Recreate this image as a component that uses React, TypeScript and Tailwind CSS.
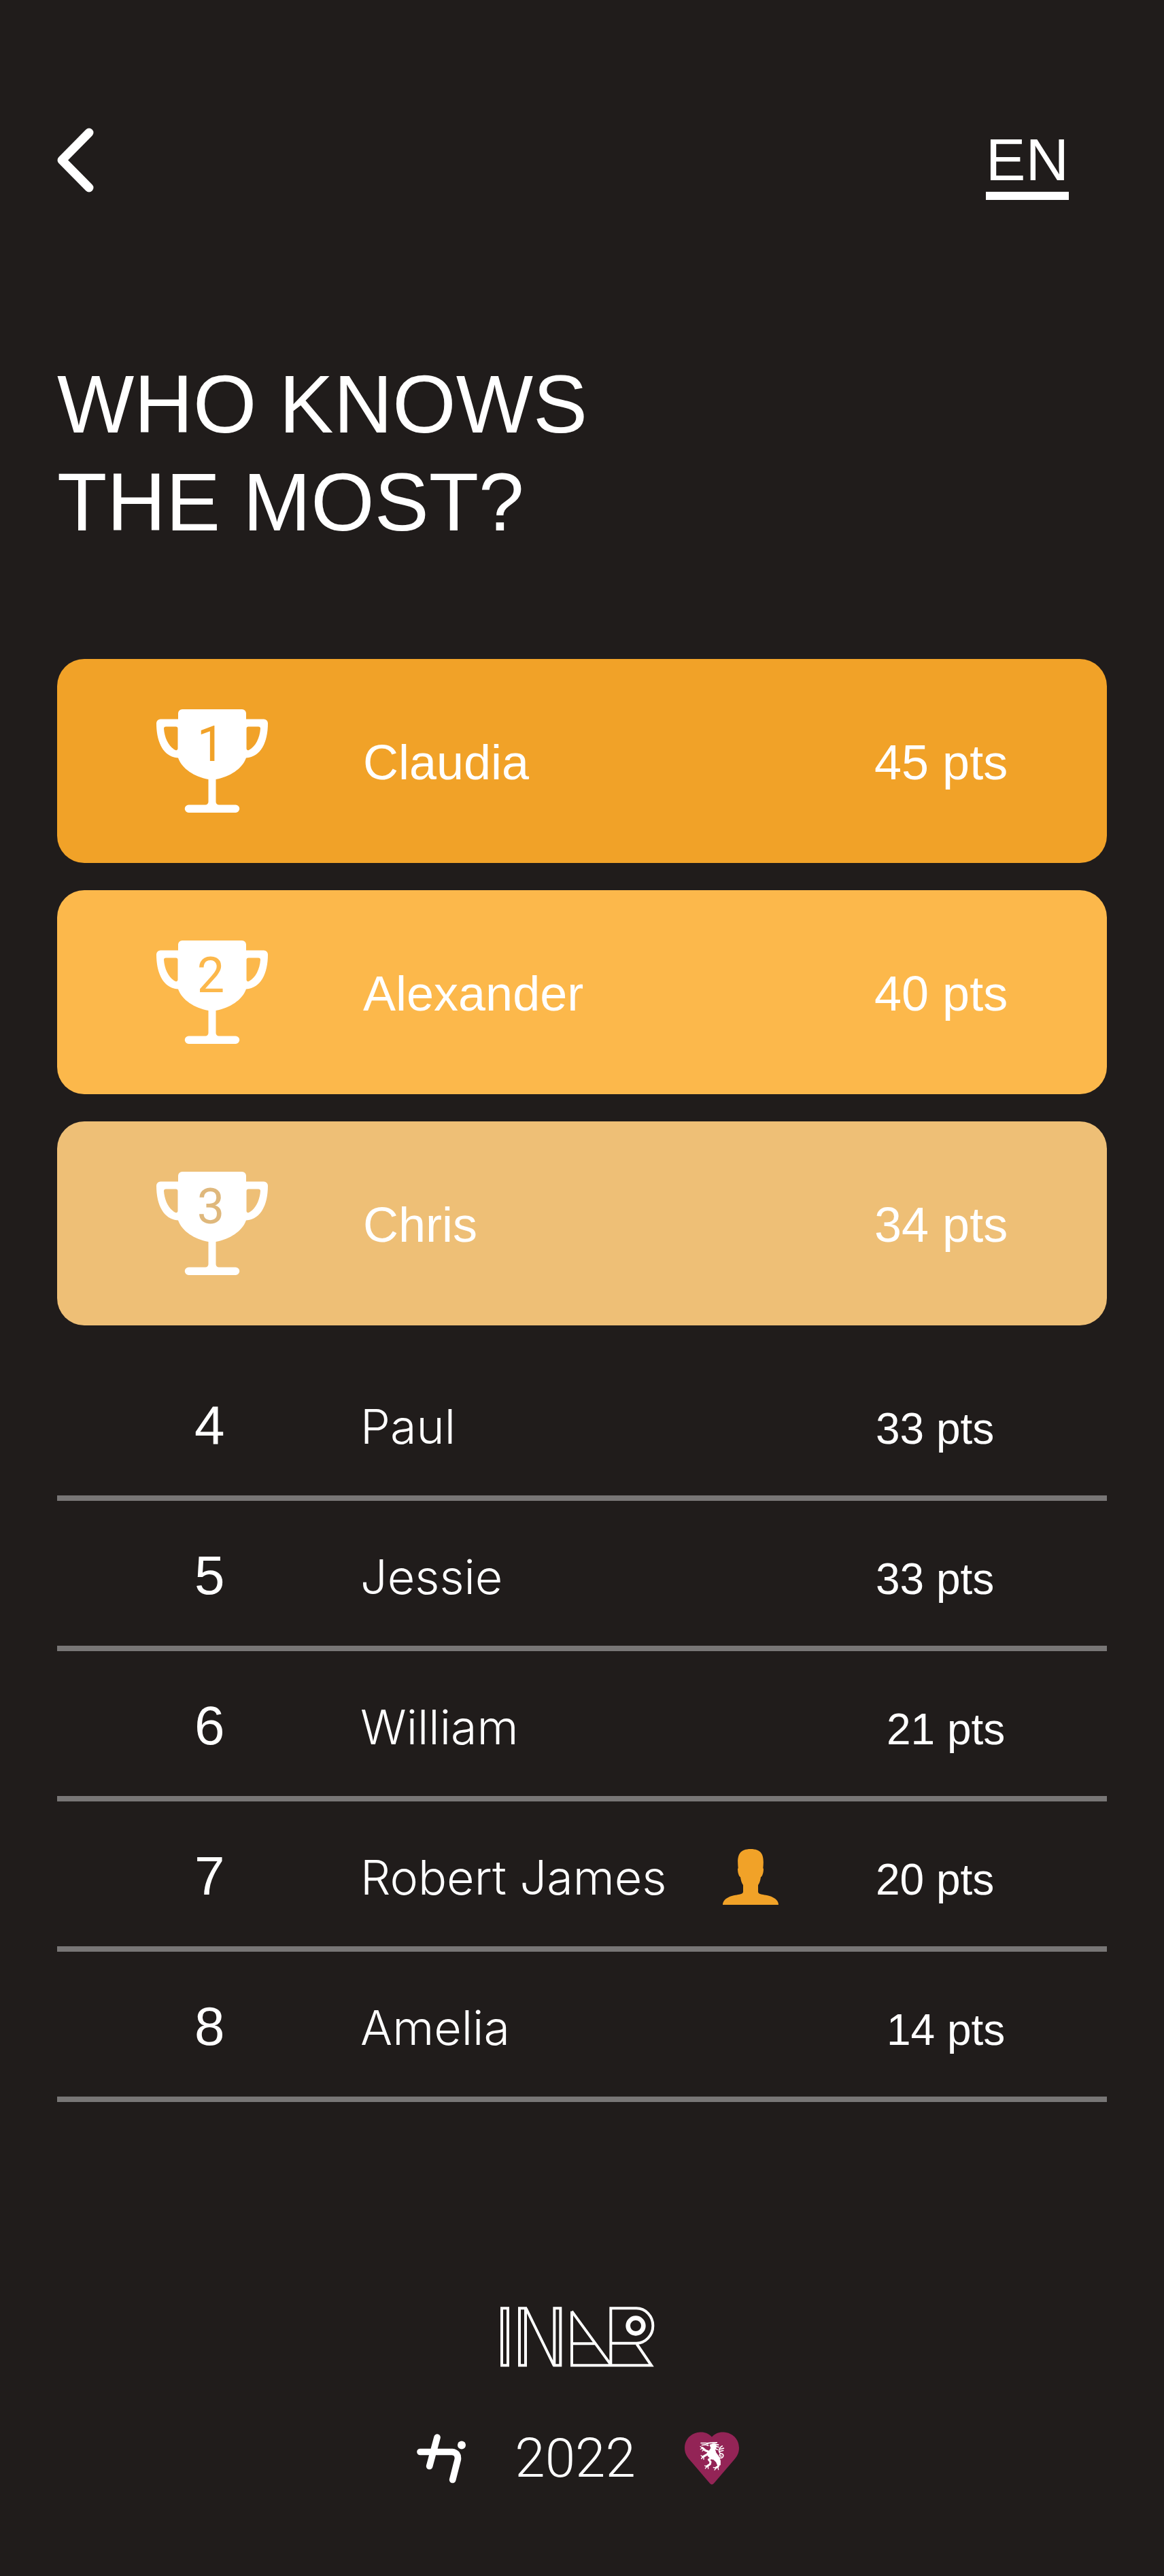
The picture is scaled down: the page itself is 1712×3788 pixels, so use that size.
import React from "react";

interface Player {
  rank: number;
  name: string;
  points: number;
  isMe?: boolean;
  indent?: boolean;
}

const podium = [
  { rank: 1, name: "Claudia", points: 45, card: "bg-[#f1a228]", digit: "text-[#f1a228]" },
  { rank: 2, name: "Alexander", points: 40, card: "bg-[#fcb84b]", digit: "text-[#fcb84b]" },
  { rank: 3, name: "Chris", points: 34, card: "bg-[#eebf76]", digit: "text-[#dfb87c]" },
];

const players: Player[] = [
  { rank: 4, name: "Paul", points: 33 },
  { rank: 5, name: "Jessie", points: 33 },
  { rank: 6, name: "William", points: 21, indent: true },
  { rank: 7, name: "Robert James", points: 20, isMe: true },
  { rank: 8, name: "Amelia", points: 14, indent: true },
];

const ChevronIcon = () => (
  <svg className="h-[95px] w-[54px]" viewBox="0 0 54 95" fill="none" stroke="currentColor" strokeWidth="13" strokeLinecap="round" strokeLinejoin="round">
    <path d="M47 7 7 47.5 47 88" />
  </svg>
);

const TrophyIcon = () => (
  <svg className="h-[152px] w-[164px]" viewBox="0 0 164 152" fill="currentColor" fillRule="evenodd">
    <path d="M38 0H126a6 6 0 0 1 6 6V14.5H158a6 6 0 0 1 6 6C164 48 154 70 132 71.5C126 88 108 99 87.500 103V136a4.500 4.500 0 0 0 4.500 4.500H116.500a5.750 5.750 0 0 1 0 11.500H47.500a5.750 5.750 0 0 1 0-11.500H72a4.500 4.500 0 0 0 4.500-4.500V103C56 99 38 88 32 71.500C10 70 0 48 0 20.500a6 6 0 0 1 6-6H32V6a6 6 0 0 1 6-6ZM14 25.500a3 3 0 0 0-3 3C12 42 18 55 28 60a2.500 2.500 0 0 0 3.500-2V28.500a3 3 0 0 0-3-3ZM150 25.500a3 3 0 0 1 3 3C152 42 146 55 136 60a2.500 2.500 0 0 1-3.500-2V28.500a3 3 0 0 1 3-3Z" />
  </svg>
);

const PersonIcon = () => (
  <svg className="size-[82px] text-[#f1a228]" viewBox="0 0 246 246" fill="currentColor">
    <path d="M0 246C0 222 28 207 56 203C72 200 90 199 90 188V159C84 151 80 139 78 124C71 121 66 104 66 88L68 84C64 40 64 0 123 0C182 0 182 40 178 84L180 88C180 104 175 121 168 124C166 139 162 151 156 159V188C156 199 174 200 190 203C218 207 246 222 246 246Z" />
  </svg>
);

const InarLogo = () => (
  <svg className="h-[89px] w-[228px]" viewBox="0 0 684 267" fill="none" stroke="currentColor" strokeWidth="12" role="img" aria-label="INAR">
    <path d="M6 7H33V259H6ZM84 7H111V259H84ZM238 7H265V259H238ZM113 7 236 259" />
    <path d="M315 20V259H666L602 165M315 20 488 257M315 163H417M487 259V7H600A73 77 0 0 1 600 161H487" />
    <circle cx="597" cy="84" r="34" strokeWidth="20" />
  </svg>
);

const StudioLogo = () => (
  <svg className="h-[73px] w-[72px]" viewBox="0 0 216 218" fill="none" stroke="currentColor" strokeWidth="29" strokeLinejoin="round" role="img" aria-label="Studio">
    <path d="M90 15 56 142M15 79H156Q184 82 181 112L158 202" strokeLinecap="round" />
    <circle cx="198" cy="49" r="18" fill="currentColor" stroke="none" />
  </svg>
);

const HeartIcon = () => (
  <svg className="h-[78px] w-[80px]" viewBox="0 0 240 233" role="img" aria-label="Styria">
    <path fill="#932456" d="M120 22C139 0 164 0 172 1C212 3 240 33 240 70C240 93 231 108 217 124L129 227Q120 237 111 227L23 124C9 108 0 93 0 70C0 33 28 3 68 1C76 0 101 0 120 22Z" />
    <g fill="none" stroke="#fff" strokeLinecap="round" strokeLinejoin="round">
      {/* head and mane */}
      <path strokeWidth="5" d="M72 49H94L102 53M76 58 92 56 104 60M96 50 118 48M122 47H142M126 54 149 57M132 62 150 67M132 72 145 78" />
      {/* body */}
      <path fill="#fff" strokeWidth="3" d="M112 57 124 52 136 53 140 64 134 80 138 92 150 108 157 126 157 146 146 148 140 134 128 122 116 118 104 108 98 94 108 84 116 72Z" />
      {/* legs */}
      <path strokeWidth="9" d="M108 88 92 82 78 70M108 96 94 102 80 110M120 114 106 122 114 132 112 142 98 152M150 138 148 152 138 158" />
      <path strokeWidth="4" d="M78 70 69 64M78 72 70 76M84 78 78 84M80 110 72 104M80 110 74 118M84 112 84 121M98 152 89 149M98 152 91 161M103 151 104 162M138 158 127 157M138 160 132 168M147 156 149 166" />
      {/* tail */}
      <path strokeWidth="5" d="M152 114C174 120 176 94 160 96C150 98 154 110 162 106M156 94C146 82 154 68 166 62M158 76 172 72M154 86 170 82" />
    </g>
  </svg>
);

const PodiumCard = ({ rank, name, points, card, digit }: (typeof podium)[number]) => (
  <li className={`grid h-[300px] grid-cols-[450px_1fr_342px] items-center rounded-[40px] text-[72px] leading-[80px] ${card}`}>
    <div className="relative ml-[146px] w-[164px]">
      <TrophyIcon />
      <span className={`absolute inset-x-0 top-3 pr-1 text-center font-['Roboto',sans-serif] ${digit}`}>{rank}</span>
    </div>
    <span className="pt-1">{name}</span>
    <span className="pt-1">{points} pts</span>
  </li>
);

const PlayerRow = ({ rank, name, points, isMe, indent }: Player) => (
  <li className="grid h-[221px] grid-cols-[446px_1fr_225px_340px] items-baseline border-b-8 border-[#787676] pt-[70px] leading-[80px]">
    <span className="pl-[202px] text-[80px]">{rank}</span>
    <span className="font-['Inter',sans-serif] text-[70px] font-light">{name}</span>
    <span className="self-start">{isMe && <PersonIcon />}</span>
    <span className={`text-[64px] ${indent ? "pl-4" : ""}`}>{points} pts</span>
  </li>
);

export default function App() {
  return (
    <div className="min-h-screen bg-[#201c1b] px-[84px] pt-[188px] pb-[130px] font-['Liberation_Sans',Arial,sans-serif] text-white">
      <header className="flex items-start justify-between pr-14">
        <button aria-label="Back">
          <ChevronIcon />
        </button>
        <button className="border-b-12 border-white pt-1 pb-1 text-[88px] leading-[86px]">EN</button>
      </header>

      <main>
        <h1 className="mt-[228px] text-[120px] leading-[144px]">
          WHO KNOWS
          <br />
          THE MOST?
        </h1>

        <ol className="mt-[159px] flex flex-col gap-10">
          {podium.map((p) => (
            <PodiumCard key={p.rank} {...p} />
          ))}
        </ol>

        <ol start={4} className="mt-[37px]">
          {players.map((p) => (
            <PlayerRow key={p.rank} {...p} />
          ))}
        </ol>
      </main>

      <footer className="mt-[301px] flex flex-col items-center gap-[94px] pr-3">
        <InarLogo />
        <div className="flex items-center gap-[72px]">
          <StudioLogo />
          <span className="font-['Roboto',sans-serif] text-[80px] leading-[80px] font-light">2022</span>
          <HeartIcon />
        </div>
      </footer>
    </div>
  );
}
